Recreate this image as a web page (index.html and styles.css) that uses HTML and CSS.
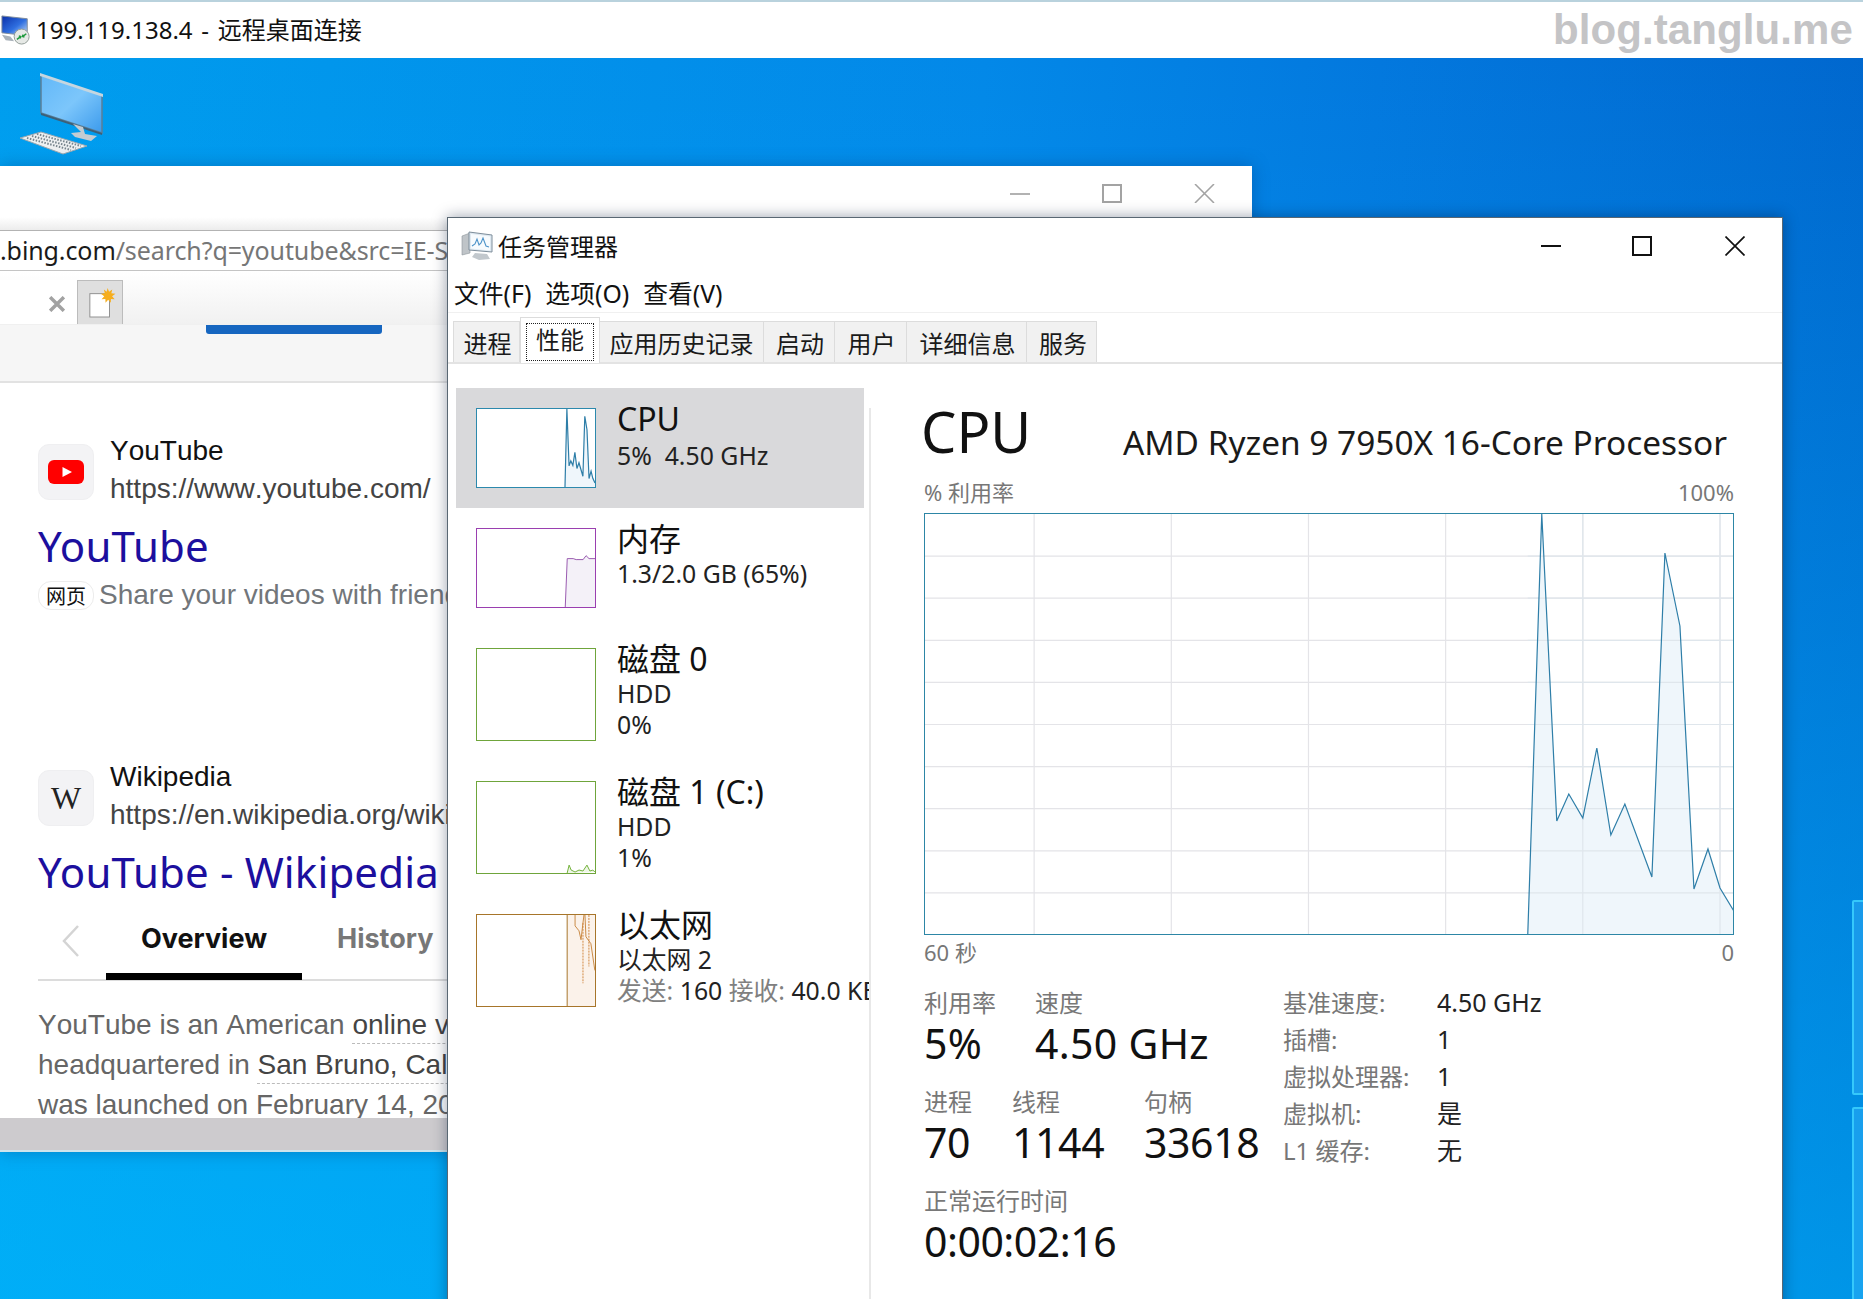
FILE: index.html
```html
<!DOCTYPE html>
<html lang="zh-CN">
<head>
<meta charset="utf-8">
<title>199.119.138.4 - 远程桌面连接</title>
<link rel="stylesheet" href="styles.css">
</head>
<body>
<header class="rdp-bar">
  <svg class="rdp-icon" viewBox="0 0 32 32">
    <defs><linearGradient id="rdpScreen" x1="0" y1="0" x2="1" y2="1"><stop offset="0" stop-color="#0a2fa8"/><stop offset=".55" stop-color="#2f6fe0"/><stop offset="1" stop-color="#cfe4f7"/></linearGradient></defs>
    <path d="M1 1 L28 4 L28 22 L1 19 Z" fill="url(#rdpScreen)" stroke="#7d8a99"/>
    <path d="M1 21 L10 23 L14 28 L5 27 Z" fill="#a9b2ba"/>
    <circle cx="22" cy="23" r="8" fill="#e6e9e6" stroke="#8f9a94"/>
    <path d="M17 26 L21 23 M19 22.5 L21 23 L20.6 25 M27 20 L23 23 M25 23.5 L23 23 L23.4 21" stroke="#1f9a3d" stroke-width="1.6" fill="none"/>
  </svg>
  <span class="rdp-title">199.119.138.4 - 远程桌面连接</span>
  <span class="watermark">blog.tanglu.me</span>
</header>

<main class="desktop">
  <svg class="pc-icon" viewBox="0 2 90 100">
    <defs><linearGradient id="pcScreen" x1="0" y1="0" x2="1" y2="1"><stop offset="0" stop-color="#62b8f8"/><stop offset=".5" stop-color="#7cc6fb"/><stop offset="1" stop-color="#3b9aec"/></linearGradient></defs>
    <path d="M26 19 L87 39 L87 77 L26 57 Z" fill="url(#pcScreen)" stroke="#5b7f98" stroke-width="1.5"/>
    <path d="M25 17 L88 38 L88 41 L25 20 Z" fill="#c5d6e0"/>
    <path d="M26 57 L87 77 L87 79 L26 59 Z" fill="#3d6078"/>
    <path d="M58 68 L68 71 L70 78 L82 80 L76 85 L60 81 L56 77 L66 76 Z" fill="#c3ccd2"/>
    <path d="M5 82 L26 76 L72 90 L48 98 Z" fill="#eef1f2" stroke="#9aa8b0"/>
    <path d="M12 82 L56 94 M17 80 L61 92 M22 78 L66 90" stroke="#77858d" stroke-width="2" stroke-dasharray="1.5 1.5" fill="none"/>
  </svg>

  <span class="stripe stripe-top"></span>
  <span class="stripe stripe-bottom"></span>

  <section class="browser">
    <div class="b-title">
      <span class="b-ctl b-min"></span>
      <span class="b-ctl b-max"></span>
      <svg class="b-ctl b-close" viewBox="0 0 22 20"><path d="M1 0 L21 20 M21 0 L1 20" stroke="#a3a3a3" stroke-width="1.6"/></svg>
    </div>
    <div class="b-url"><div class="b-url-text"><b class="b-host">.bing.com</b>/search?q=youtube&amp;src=IE-SearchBox&amp;FORM=IESR4N</div></div>
    <div class="b-tabs">
      <div class="b-tab">
        <svg class="b-tab-x" viewBox="0 0 14 14"><path d="M1 1 L13 13 M13 1 L1 13" stroke="#a2a2a2" stroke-width="3"/></svg>
      </div>
      <div class="b-newtab">
        <svg class="b-newtab-ico" viewBox="0 0 30 32">
          <rect x="2" y="6" width="21" height="25" fill="#fff" stroke="#8c8c8c"/>
          <path d="M21 0 L22.6 4 L26 1.6 L25 5.6 L29.4 6 L25.8 8.8 L28.6 12 L24.6 11.6 L24.4 15.6 L21.6 12.6 L18.8 15.6 L18.6 11.6 L14.6 12 L17.4 8.8 L13.8 6 L18 5.6 L17 1.6 L20 4 Z" fill="#f6ae1e"/>
        </svg>
      </div>
    </div>
    <div class="b-hero"><span class="b-hero-bar"></span></div>
    <div class="b-results">
      <article class="result">
        <div class="result-head">
          <span class="fav">
            <svg class="yt-logo" viewBox="0 0 36 24"><rect width="36" height="24" rx="6" fill="#f00"/><path d="M14.5 7 L24 12 L14.5 17 Z" fill="#fff"/></svg>
          </span>
          <div class="site"><div class="site-name">YouTube</div><div class="site-url">https://www.youtube.com/</div></div>
        </div>
        <h2 class="result-title">YouTube</h2>
        <p class="snippet"><span class="badge">网页</span>Share your videos with friends, family, and the world</p>
      </article>
      <article class="result result-wiki">
        <div class="result-head">
          <span class="fav fav-w">W</span>
          <div class="site"><div class="site-name">Wikipedia</div><div class="site-url">https://en.wikipedia.org/wiki/YouTube</div></div>
        </div>
        <h2 class="result-title">YouTube - Wikipedia</h2>
        <nav class="wiki-tabs">
          <svg class="wiki-prev" viewBox="0 0 18 32"><path d="M16 1 L2 16 L16 31" fill="none" stroke="#d4d4d4" stroke-width="2.5"/></svg>
          <span class="wiki-tab wiki-tab-on">Overview</span>
          <span class="wiki-tab">History</span>
        </nav>
        <p class="wiki-text">YouTube is an American <a class="wlink">online video sharing</a> and social media platform</p>
        <p class="wiki-text">headquartered in <a class="wlink">San Bruno, California</a>. It</p>
        <p class="wiki-text">was launched on February 14, 2005</p>
      </article>
    </div>
    <div class="b-footer"></div>
  </section>

  <section class="taskmgr">
    <div class="tm-title">
      <svg class="tm-icon" viewBox="0 0 32 30">
        <path d="M1 5 L9 2 L9 22 L1 24 Z" fill="#bfc4c8" stroke="#8d959b" stroke-width=".6"/>
        <path d="M8 1 L31 4 L31 21 L8 19 Z" fill="#dfe9f1" stroke="#7e8e9b"/>
        <path d="M10 3 L29 5.5 L29 19.5 L10 17.5 Z" fill="#f7fbfe"/>
        <path d="M11 15 L14 13 L16 8 L18 14 L20 12 L22 7 L25 15 L28 16" fill="none" stroke="#4c93c9" stroke-width="1.1"/>
        <path d="M14 22 L26 23 L29 28 L18 29 L11 26 Z" fill="#c2c8cd"/>
      </svg>
      <span class="tm-name">任务管理器</span>
      <div class="tm-ctls">
        <span class="tm-min"></span>
        <span class="tm-max"></span>
        <svg class="tm-close" viewBox="0 0 20 20"><path d="M0.5 0.5 L19.5 19.5 M19.5 0.5 L0.5 19.5" stroke="#111" stroke-width="1.7"/></svg>
      </div>
    </div>
    <div class="tm-menu"><span>文件(F)</span><span>选项(O)</span><span>查看(V)</span></div>
    <div class="tm-tabs">
      <span class="tm-tab">进程</span>
      <span class="tm-tab tm-tab-on"><span class="tm-focus">性能</span></span>
      <span class="tm-tab">应用历史记录</span>
      <span class="tm-tab">启动</span>
      <span class="tm-tab">用户</span>
      <span class="tm-tab">详细信息</span>
      <span class="tm-tab">服务</span>
    </div>
    <div class="tm-body">
      <aside class="side">
        <div class="item item-short item-on">
          <svg class="thumb thumb-cpu" viewBox="0 0 810 421" preserveAspectRatio="none">
            <path class="cpu-fill" d="M604 421 L617 0 L632 307 L644 280 L658 304 L672 234 L686 321 L700 290 L727 363 L740 39 L755 112 L769 375 L783 335 L795 374 L810 399 L810 421 Z"/>
            <path class="cpu-line thumb-line" d="M604 421 L617 0 L632 307 L644 280 L658 304 L672 234 L686 321 L700 290 L727 363 L740 39 L755 112 L769 375 L783 335 L795 374 L810 399"/>
          </svg>
          <div class="item-text"><div class="item-h">CPU</div><div class="item-s">5%&nbsp; 4.50 GHz</div></div>
        </div>
        <div class="item item-short">
          <svg class="thumb thumb-mem" viewBox="0 0 119 79" preserveAspectRatio="none">
            <path class="mem-fill" d="M89 79 L91 30 L97 30 L100 31 L107 31 L110 27 L113 30 L119 30 L119 79 Z"/>
            <path class="mem-line" d="M89 79 L91 30 L97 30 L100 31 L107 31 L110 27 L113 30 L119 30"/>
          </svg>
          <div class="item-text"><div class="item-h">内存</div><div class="item-s">1.3/2.0 GB (65%)</div></div>
        </div>
        <div class="item">
          <svg class="thumb thumb-disk thumb-tall" viewBox="0 0 119 92"></svg>
          <div class="item-text"><div class="item-h">磁盘 0</div><div class="item-s">HDD</div><div class="item-s">0%</div></div>
        </div>
        <div class="item">
          <svg class="thumb thumb-disk thumb-tall" viewBox="0 0 119 92">
            <path class="disk-line" d="M91 92 L93 84 L95 89 L99 91 L103 89 L107 90 L111 84 L114 90 L117 89 L119 91"/>
          </svg>
          <div class="item-text"><div class="item-h">磁盘 1 (C:)</div><div class="item-s">HDD</div><div class="item-s">1%</div></div>
        </div>
        <div class="item">
          <svg class="thumb thumb-eth thumb-tall" viewBox="0 0 119 92">
            <rect class="eth-fill" x="91" y="0" width="28" height="92"/>
            <path class="eth-edge" d="M91 0 L91 92"/>
            <path class="eth-line" d="M99 0 L99 11 L103 16 L105 25 L107 8 L108 0 M109 0 L110 22 L115 29 L119 56"/>
            <path class="eth-dash" d="M107 8 L107 69 M113 0 L113 52"/>
          </svg>
          <div class="item-text"><div class="item-h">以太网</div><div class="item-s">以太网 2</div><div class="item-s item-net"><i>发送:</i> 160 <i>接收:</i> 40.0 KB/s</div></div>
        </div>
      </aside>
      <div class="panel">
        <div class="panel-head"><h1 class="panel-cpu">CPU</h1><span class="panel-model">AMD Ryzen 9 7950X 16-Core Processor</span></div>
        <div class="axis axis-top"><span>% 利用率</span><span>100%</span></div>
        <svg class="chart" viewBox="1 0 807 420" preserveAspectRatio="none">
          <path class="grid" d="M0 42.1H810 M0 84.2H810 M0 126.3H810 M0 168.4H810 M0 210.5H810 M0 252.6H810 M0 294.7H810 M0 336.8H810 M0 378.9H810 M110 0V421 M247 0V421 M384 0V421 M521 0V421 M658 0V421 M795 0V421"/>
          <path class="cpu-fill" d="M603 421 L617 0 L632 307 L644 280 L658 304 L672 234 L686 321 L700 290 L727 363 L740 39 L755 112 L769 375 L783 335 L795 374 L810 399 L810 421 Z"/>
          <path class="grid grid-over" d="M603 42.1H810 M603 84.2H810 M603 126.3H810 M603 168.4H810 M603 210.5H810 M603 252.6H810 M603 294.7H810 M603 336.8H810 M603 378.9H810 M658 0V421 M795 0V421"/>
          <path class="cpu-line" d="M603 421 L617 0 L632 307 L644 280 L658 304 L672 234 L686 321 L700 290 L727 363 L740 39 L755 112 L769 375 L783 335 L795 374 L810 399"/>
        </svg>
        <div class="axis"><span>60 秒</span><span>0</span></div>
        <div class="stats">
          <div class="stats-left">
            <div class="stat-row stat-row-a">
              <div><div class="stat-l">利用率</div><div class="stat-v">5%</div></div>
              <div><div class="stat-l">速度</div><div class="stat-v">4.50 GHz</div></div>
            </div>
            <div class="stat-row stat-row-b">
              <div><div class="stat-l">进程</div><div class="stat-v">70</div></div>
              <div><div class="stat-l">线程</div><div class="stat-v">1144</div></div>
              <div><div class="stat-l">句柄</div><div class="stat-v">33618</div></div>
            </div>
            <div class="stat-row stat-row-c">
              <div><div class="stat-l">正常运行时间</div><div class="stat-v">0:00:02:16</div></div>
            </div>
          </div>
          <dl class="specs">
            <dt>基准速度:</dt><dd>4.50 GHz</dd>
            <dt>插槽:</dt><dd>1</dd>
            <dt>虚拟处理器:</dt><dd>1</dd>
            <dt>虚拟机:</dt><dd>是</dd>
            <dt>L1 缓存:</dt><dd>无</dd>
          </dl>
        </div>
      </div>
    </div>
  </section>
</main>
</body>
</html>
```

FILE: styles.css
```css
* { box-sizing: border-box; }
html, body { margin: 0; padding: 0; }
body {
  width: 1863px;
  height: 1299px;
  overflow: hidden;
  display: flex;
  flex-direction: column;
  background: #fff;
  font-family: "Noto Sans", "Noto Sans CJK SC", sans-serif;
  color: #111;
}

/* remote desktop title bar */
.rdp-bar {
  height: 58px;
  flex: none;
  display: flex;
  align-items: center;
  border-top: 2px solid #b9d2dd;
  background: #fff;
  padding-right: 10px;
}
.rdp-icon { width: 30px; height: 30px; margin-left: 1px; flex: none; }
.rdp-title { margin-left: 5px; font-size: 24px; word-spacing: 2.5px; line-height: 56px; color: #111; }
.watermark {
  margin-left: auto;
  font-family: "Liberation Sans", sans-serif;
  font-weight: 700;
  font-size: 42px;
  color: #c4c4c6;
  letter-spacing: .1px;
}

/* desktop */
.desktop {
  position: relative;
  flex: 1;
  overflow: hidden;
  background:
    linear-gradient(180deg, rgba(0, 190, 255, 0) 0%, rgba(0, 190, 255, .55) 100%),
    linear-gradient(95deg, #009dee 0%, #0388e8 50%, #0378de 70%, #0064cb 100%);
}
.pc-icon { position: absolute; left: 15px; top: 0; width: 90px; height: 100px; }
.stripe { position: absolute; left: 1852px; width: 14px; border: 2px solid #35c8fb; border-radius: 2px; background: rgba(70, 190, 255, .35); }
.stripe-top { top: 842px; height: 195px; }
.stripe-bottom { top: 1049px; height: 200px; }

/* background browser window */
.browser {
  position: absolute;
  left: 0;
  top: 108px;
  width: 1252px;
  height: 986px;
  display: flex;
  flex-direction: column;
  background: #fff;
  box-shadow: 0 0 16px rgba(0, 50, 110, .35);
  overflow: hidden;
  font-family: "Liberation Sans", "Noto Sans CJK SC", sans-serif;
}
.b-title {
  height: 64px;
  flex: none;
  display: flex;
  justify-content: flex-end;
  align-items: flex-start;
  padding: 18px 37px 0 0;
  background: linear-gradient(180deg, #fff 0, #fff 80%, #ececec 100%);
}
.b-ctl { display: block; flex: none; }
.b-min { width: 20px; height: 2px; background: #b2b2b2; margin: 9px 0 0; }
.b-max { width: 20px; height: 19px; border: 2px solid #a3a3a3; margin-left: 72px; }
.b-close { width: 21px; height: 19px; margin-left: 72px; }
.b-url {
  height: 41px;
  flex: none;
  border-top: 1px solid #b3b3b3;
  border-bottom: 1px solid #c4c4c4;
  background: #fff;
}
.b-url-text {
  width: 448px;
  overflow: hidden;
  font-family: "Noto Sans", sans-serif;
  font-size: 25px;
  letter-spacing: -.1px;
  line-height: 38px;
  color: #767676;
  white-space: nowrap;
}
.b-host { font-weight: 400; color: #1a1a1a; }
.b-tabs {
  height: 54px;
  flex: none;
  display: flex;
  padding-top: 9px;
  background: linear-gradient(180deg, #fff 0, #f1f1f1 100%);
  border-bottom: 1px solid #f0f0f0;
}
.b-tab {
  width: 77px;
  background: #fff;
  display: flex;
  justify-content: flex-end;
  align-items: flex-start;
  padding: 16px 12px 0 0;
}
.b-tab-x { width: 16px; height: 16px; }
.b-newtab {
  width: 46px;
  background: #dfdfdf;
  border: 1px solid #bcbcbc;
  border-bottom: 0;
  padding: 7px 0 0 10px;
}
.b-newtab-ico { display: block; width: 28px; height: 30px; }
.b-hero {
  height: 58px;
  flex: none;
  background: #f6f6f6;
  border-bottom: 2px solid #e2e2e2;
  padding-left: 206px;
}
.b-hero-bar { display: block; width: 176px; height: 9px; background: #1666c0; border-radius: 0 0 3px 3px; }
.b-results { flex: 1; width: 448px; overflow: hidden; padding: 49px 0 0 38px; min-height: 0; white-space: nowrap; }
.b-footer { height: 34px; flex: none; background: #cdcbce; border-bottom: 2px solid #cfe4ec; }

.result-head { display: flex; align-items: center; gap: 16px; }
.fav {
  width: 56px;
  height: 56px;
  flex: none;
  margin-top: 4px;
  display: flex;
  align-items: center;
  justify-content: center;
  background: #f3f3f5;
  border: 1px solid #efeff1;
  border-radius: 11px;
}
.yt-logo { width: 36px; height: 24px; }
.fav-w { font-family: "Liberation Serif", serif; font-size: 32px; color: #222; }
.site-name { font-size: 28px; line-height: 38px; color: #111; font-kerning: none; }
.site-url { font-size: 28px; line-height: 38px; color: #444; font-kerning: none; }
.result-title {
  margin: 10px 0 0;
  font-family: "Noto Sans", sans-serif;
  font-weight: 400;
  font-size: 42px;
  letter-spacing: .15px;
  line-height: 56px;
  color: #1c0f9e;
}
.snippet { margin: 2px 0 0; font-size: 28px; line-height: 38px; color: #72767a; display: flex; align-items: center; }
.badge {
  width: 56px;
  height: 29px;
  flex: none;
  margin-right: 5px;
  border: 1px solid #ececec;
  border-radius: 13px;
  font-family: "Noto Sans CJK SC", serif;
  font-size: 20px;
  line-height: 27px;
  text-align: center;
  color: #111;
}
.result-wiki { margin-top: 144px; }
.wiki-tabs {
  height: 81px;
  display: flex;
  align-items: flex-start;
  border-bottom: 2px solid #dcdcdc;
  font-family: "Inter", sans-serif;
  font-weight: 700;
  font-size: 27px;
}
.wiki-prev { width: 18px; height: 32px; margin: 25px 0 0 24px; flex: none; }
.wiki-tab { line-height: 78px; color: #777; margin-left: 35px; }
.wiki-tab-on { width: 196px; height: 80px; margin-left: 26px; text-align: center; color: #111; border-bottom: 7px solid #000; }
.wiki-text { margin: 0; font-size: 28px; line-height: 40px; color: #666; font-kerning: none; }
.wiki-tabs + .wiki-text { margin-top: 24px; }
.wlink { color: #444; text-decoration: underline dashed #bbb 1px; text-underline-offset: 9px; }

/* task manager window */
.taskmgr {
  position: absolute;
  left: 447px;
  top: 159px;
  width: 1336px;
  height: 1100px;
  display: flex;
  flex-direction: column;
  background: #fff;
  border: 1px solid #596773;
  box-shadow: 0 0 14px rgba(0, 20, 50, .4);
}
.tm-title { height: 55px; flex: none; display: flex; align-items: center; padding-left: 13px; }
.tm-icon { width: 32px; height: 30px; flex: none; }
.tm-name { margin-left: 5px; font-size: 24px; }
.tm-ctls { margin-left: auto; display: flex; align-items: center; padding-right: 37px; height: 100%; }
.tm-min { width: 20px; height: 2px; background: #111; }
.tm-max { width: 20px; height: 20px; border: 2px solid #111; margin-left: 71px; }
.tm-close { width: 20px; height: 20px; margin-left: 73px; }
.tm-menu {
  height: 40px;
  flex: none;
  display: flex;
  gap: 14px;
  padding-left: 6px;
  font-size: 24.8px;
  line-height: 41px;
  border-bottom: 1px solid #f0f0f0;
}
.tm-tabs {
  height: 51px;
  flex: none;
  display: grid;
  grid-template-columns: 67px 80px 164px 71px 72px 120px 70px;
  align-items: end;
  padding-left: 5px;
  border-bottom: 2px solid #e3e3e3;
  font-size: 24px;
  color: #1a1a1a;
}
.tm-tab {
  height: 41px;
  padding-left: 2px;
  background: #f1f1f1;
  border: 1px solid #dcdcdc;
  border-bottom: 0;
  border-left: 0;
  text-align: center;
  line-height: 44px;
  white-space: nowrap;
}
.tm-tab:first-child { border-left: 1px solid #dcdcdc; }
.tm-tab:nth-child(3) { padding-left: 0; }
.tm-tab:last-child { padding-left: 3px; }
.tm-tab-on {
  height: 46px;
  margin-bottom: -1px;
  background: #fff;
  border-left: 1px solid #dcdcdc;
  padding: 5px 5px 0;
  position: relative;
}
.tm-focus {
  display: block;
  height: 38px;
  border: 1px dotted #222;
  line-height: 31px;
}
.tm-body { flex: 1; min-height: 0; display: flex; }

.side {
  width: 423px;
  flex: none;
  position: relative;
  overflow: hidden;
  padding: 24px 0 0 8px;
}
.side::after {
  content: "";
  position: absolute;
  right: 0;
  top: 44px;
  bottom: 0;
  width: 2px;
  background: #e8e8e8;
}
.item { width: 408px; height: 133px; display: flex; padding: 11px 0 0 20px; gap: 21px; white-space: nowrap; }
.item-short { height: 120px; }
.item-on { background: #d9d9db; }
.thumb { width: 120px; height: 80px; flex: none; margin-top: 9px; border: 1px solid; background: #fff; display: block; overflow: hidden; }
.thumb-tall { height: 93px; }
.thumb-cpu { border-color: #2c89ad; }
.thumb-mem { border-color: #9a3fb0; }
.thumb-disk { border-color: #6fa53b; }
.thumb-eth { border-color: #a7752a; }
.item-h { font-size: 32px; line-height: 39px; color: #111; }
.item-s { font-size: 24.8px; line-height: 31px; color: #222; }
.item-on .item-s { line-height: 34px; }
.item-net i { font-style: normal; color: #808080; }
.cpu-fill { fill: #eff6fb; stroke: none; }
.cpu-line { fill: none; stroke: #2e7ea8; stroke-width: 1.2; }
.thumb-line { vector-effect: non-scaling-stroke; stroke-width: 1.2; }
.mem-fill { fill: #f4f1f8; }
.mem-line { fill: none; stroke: #9a5bb0; stroke-width: 1; vector-effect: non-scaling-stroke; }
.disk-line { fill: #eef6e6; stroke: #73b23c; stroke-width: 1; }
.eth-fill { fill: #fbf2ea; }
.eth-edge { stroke: #a7752a; stroke-width: 1; }
.eth-line { fill: none; stroke: #c98a45; stroke-width: 1; }
.eth-dash { fill: none; stroke: #d0873f; stroke-width: 1; stroke-dasharray: 2 1; }

.panel { flex: 1; min-width: 0; padding: 34px 48px 0 53px; }
.panel-head { display: flex; justify-content: space-between; align-items: center; height: 70px; padding: 0 7px 4px 0; }
.panel-cpu { margin: 0 0 0 -3px; font-weight: 400; font-size: 56px; line-height: 66px; color: #111; }
.panel-model { font-size: 33.4px; margin-top: 21px; color: #1a1a1a; }
.axis { display: flex; justify-content: space-between; height: 30px; font-size: 22px; line-height: 30px; color: #777; margin-top: 2px; }
.axis-top { margin: 9px 0 6px; }
.chart { display: block; width: 810px; height: 422px; border: 1.5px solid #2d86a6; background: #fff; overflow: hidden; }
.grid { fill: none; stroke: #e4e4e8; stroke-width: 1.2; }
.grid-over { stroke: #dfe6ec; }

.stats { display: flex; margin-top: 17px; }
.stats-left { width: 359px; flex: none; padding-top: 4px; display: flex; flex-direction: column; gap: 19px; }
.stat-row { display: grid; }
.stat-row-a { grid-template-columns: 111px auto; }
.stat-row-a .stat-v { letter-spacing: .3px; }
.stat-row-b { grid-template-columns: 88px 132px auto; }
.stat-row-b .stat-v { letter-spacing: -.4px; }
.stat-row-c .stat-v { letter-spacing: -.5px; }
.stat-l { font-size: 24px; line-height: 30px; color: #787878; white-space: nowrap; }
.stat-v { font-size: 41px; line-height: 50px; color: #111; white-space: nowrap; }
.specs {
  margin: 0;
  display: grid;
  grid-template-columns: 154px auto;
  grid-auto-rows: 37px;
  line-height: 37px;
  align-content: start;
}
.specs dt { font-size: 24px; color: #777; white-space: nowrap; }
.specs dd { font-size: 25px; margin: 0; color: #222; white-space: nowrap; }
```
